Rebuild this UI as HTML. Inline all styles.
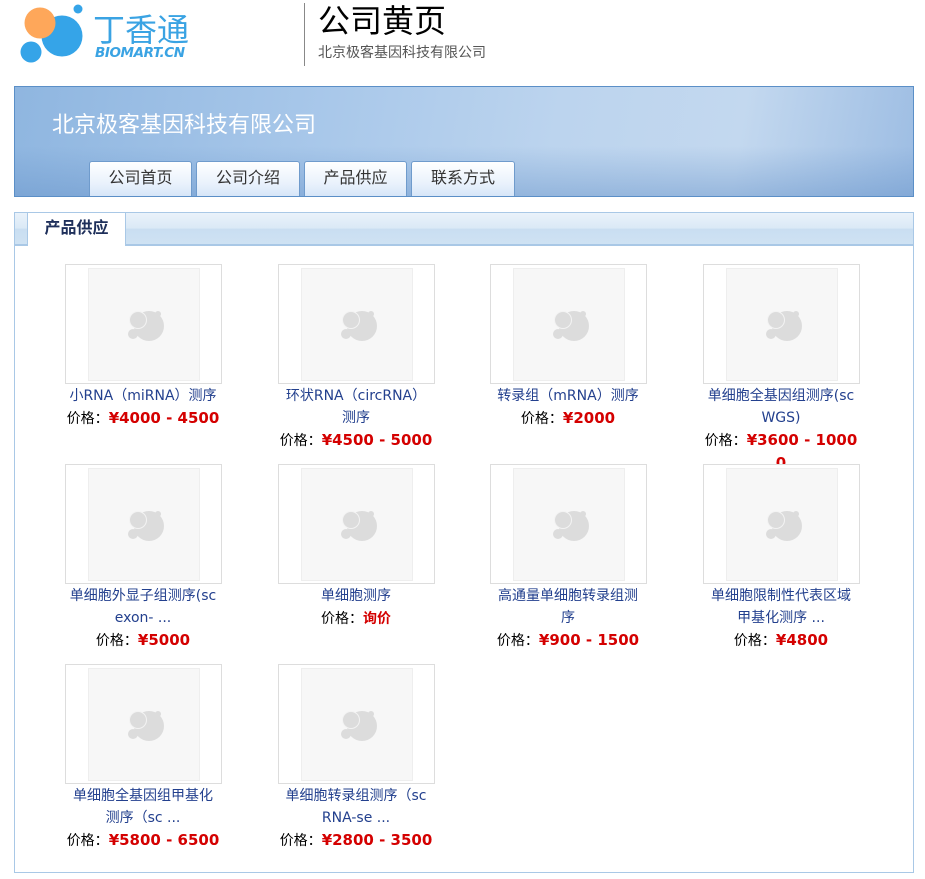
<!DOCTYPE html>
<html><head><meta charset="utf-8">
<style>
*{margin:0;padding:0;box-sizing:border-box}
body{width:925px;height:879px;background:#fff;font-family:"Liberation Sans","Noto Sans CJK SC",sans-serif;position:relative;overflow:hidden}
.abs{position:absolute}
.banner{left:14px;top:86px;width:900px;height:111px;border:1px solid #5b8fc7;background:linear-gradient(100deg,#8fb6e0 0%,#a9c8ea 35%,#bcd4ee 60%,#c3d8ef 80%,#9dbde3 100%);overflow:hidden}
.banner:after{content:"";position:absolute;left:0;right:0;bottom:0;height:50px;background:linear-gradient(to bottom,rgba(120,160,210,0),rgba(100,145,200,.45))}
.tab{position:absolute;top:74px;height:36px;border:1px solid #6f9bcc;border-bottom:none;border-radius:3px 3px 0 0;background:linear-gradient(#fff,#eaf2fc 60%,#d5e5f8);color:#333;font-size:16px;text-align:center;line-height:34px;z-index:2}
.box{left:14px;top:212px;width:900px;height:661px;border:1px solid #a9c8e6}
.bar{left:0;top:0;width:898px;height:33px;background:linear-gradient(#eaf2fa,#dae9f6 50%,#c9def1 51%,#cfe2f3);border-bottom:2px solid #a9c8e6}
.item{position:absolute;width:170px;text-align:center;font-size:14px;line-height:22px;font-family:"DejaVu Sans","Noto Sans CJK SC",sans-serif}
.item .nm,.item .pr{margin:0 auto;white-space:nowrap}
.item .nm{margin-top:1px}
.img{width:157px;height:120px;border:1px solid #ddd;background:#fff;margin:0 auto;position:relative}
.img .in{position:absolute;left:22px;top:3px;width:112px;height:113px;background:#f7f7f7;border:1px solid #eee}
.nm{color:#23408e}
.pr{color:#000}
.pr i{font-style:normal;font-family:"Noto Sans CJK SC",sans-serif}
.pr b{color:#d40000;font-weight:bold;font-size:15px}
</style></head><body>
<svg class="abs" style="left:0;top:0" width="200" height="70">
<circle cx="62" cy="36" r="20.5" fill="#35a4e8"/>
<circle cx="40" cy="23" r="15.5" fill="#fea75a"/>
<circle cx="31" cy="52" r="10.5" fill="#35a4e8"/>
<circle cx="78" cy="9" r="4.5" fill="#35a4e8"/>
<text x="93" y="41" font-size="32" fill="#3aa3e3" font-family="Noto Sans CJK SC,sans-serif">丁香通</text>
<text x="95" y="57" font-size="13.5" font-weight="bold" font-style="italic" fill="#3aa3e3" font-family="DejaVu Sans,sans-serif" textLength="90">BIOMART.CN</text>
</svg>
<div class="abs" style="left:304px;top:3px;width:1px;height:63px;background:#888"></div>
<div class="abs" style="left:318px;top:0px;font-size:32px;color:#000;line-height:42px">公司黄页</div>
<div class="abs" style="left:318px;top:42px;font-size:14px;color:#555">北京极客基因科技有限公司</div>

<div class="abs banner">
<div class="abs" style="left:37px;top:20px;font-size:22px;color:#fff;z-index:2">北京极客基因科技有限公司</div>
<div class="tab" style="left:74px;width:103px">公司首页</div>
<div class="tab" style="left:181px;width:104px">公司介绍</div>
<div class="tab" style="left:289px;width:103px">产品供应</div>
<div class="tab" style="left:396px;width:104px">联系方式</div>
</div>

<div class="abs box">
<div class="abs bar"></div>
<div class="abs" style="left:12px;top:0;width:99px;height:33px;background:#fff;border-right:1px solid #a9c8e6;border-left:1px solid #a9c8e6;font-size:16px;font-weight:bold;color:#1e2f5a;text-align:center;line-height:32px">产品供应</div>
</div>

<div class="item" style="left:58px;top:264px"><div class="img"></div><div class="nm">小RNA（miRNA）测序</div><div class="pr"><i>价格：</i><b>¥4000 - 4500</b></div></div>
<div class="item" style="left:271px;top:264px"><div class="img"></div><div class="nm">环状RNA（circRNA）<br>测序</div><div class="pr"><i>价格：</i><b>¥4500 - 5000</b></div></div>
<div class="item" style="left:483px;top:264px"><div class="img"></div><div class="nm">转录组（mRNA）测序</div><div class="pr"><i>价格：</i><b>¥2000</b></div></div>
<div class="item" style="left:696px;top:264px"><div class="img"></div><div class="nm">单细胞全基因组测序(sc<br>WGS)</div><div class="pr"><i>价格：</i><b>¥3600 - 1000<br>0</b></div></div>

<div class="item" style="left:58px;top:464px"><div class="img"></div><div class="nm">单细胞外显子组测序(sc<br>exon- ...</div><div class="pr"><i>价格：</i><b>¥5000</b></div></div>
<div class="item" style="left:271px;top:464px"><div class="img"></div><div class="nm">单细胞测序</div><div class="pr"><i>价格：</i><b style="font-size:14px">询价</b></div></div>
<div class="item" style="left:483px;top:464px"><div class="img"></div><div class="nm">高通量单细胞转录组测<br>序</div><div class="pr"><i>价格：</i><b>¥900 - 1500</b></div></div>
<div class="item" style="left:696px;top:464px"><div class="img"></div><div class="nm">单细胞限制性代表区域<br>甲基化测序 ...</div><div class="pr"><i>价格：</i><b>¥4800</b></div></div>

<div class="item" style="left:58px;top:664px"><div class="img"></div><div class="nm">单细胞全基因组甲基化<br>测序（sc ...</div><div class="pr"><i>价格：</i><b>¥5800 - 6500</b></div></div>
<div class="item" style="left:271px;top:664px"><div class="img"></div><div class="nm">单细胞转录组测序（sc<br>RNA-se ...</div><div class="pr"><i>价格：</i><b>¥2800 - 3500</b></div></div>

<script>
document.querySelectorAll('.img').forEach(function(e){
e.innerHTML='<div class="in"></div><svg style="position:absolute;left:0;top:0" width="157" height="120"><circle cx="83" cy="61" r="15" fill="#dcdcdc"/><circle cx="72" cy="55" r="8.5" fill="#dcdcdc" stroke="#f3f3f3" stroke-width="1"/><circle cx="67" cy="69" r="5" fill="#dcdcdc"/><circle cx="92" cy="49" r="3" fill="#dcdcdc"/></svg>';
});
</script>
</body></html>
